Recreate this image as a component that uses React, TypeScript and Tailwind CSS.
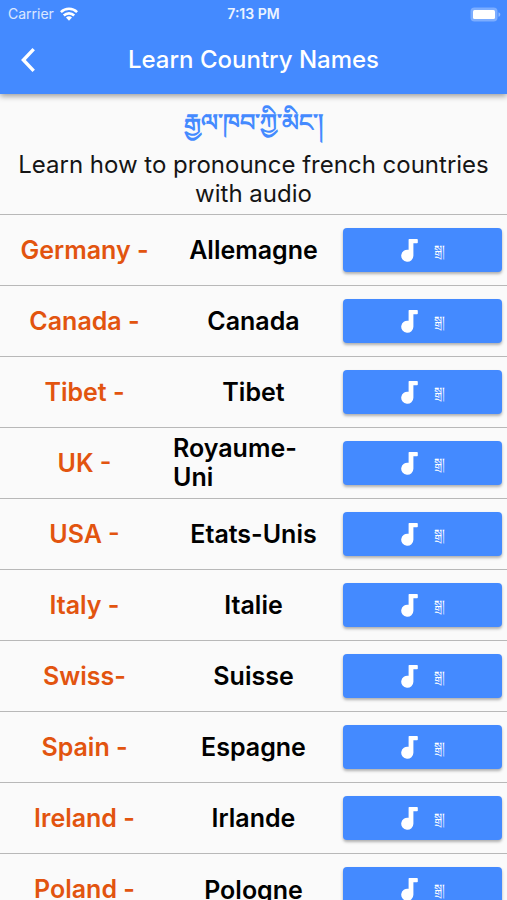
import React from 'react';

interface Country {
  name: string;
  french: string;
}

const COUNTRIES: Country[] = [
  { name: 'Germany -', french: 'Allemagne' },
  { name: 'Canada -', french: 'Canada' },
  { name: 'Tibet -', french: 'Tibet' },
  { name: 'UK -', french: 'Royaume-Uni' },
  { name: 'USA -', french: 'Etats-Unis' },
  { name: 'Italy -', french: 'Italie' },
  { name: 'Swiss-', french: 'Suisse' },
  { name: 'Spain -', french: 'Espagne' },
  { name: 'Ireland -', french: 'Irlande' },
  { name: 'Poland -', french: 'Pologne' },
];

const WifiIcon: React.FC = () => (
  <svg viewBox="0 0 18 14" className="h-3.5 w-[18px]" fill="none" stroke="currentColor" strokeWidth="2.6" aria-hidden="true">
    <path d="M0.9 5.1a11.6 11.6 0 0 1 16.2 0" />
    <path d="M3.8 8.5a7.4 7.4 0 0 1 10.4 0" />
    <path d="M9 13.8l-3-3.2a4.2 4.2 0 0 1 6 0z" fill="currentColor" stroke="none" />
  </svg>
);

const BatteryIcon: React.FC = () => (
  <svg viewBox="0 0 31 15" className="h-[15px] w-[31px]" aria-hidden="true">
    <rect x="0.5" y="0.5" width="27" height="14" rx="4" fill="#fff" fillOpacity="0.3" />
    <rect x="3" y="3" width="22" height="9" rx="1.5" fill="#fff" />
    <path d="M28.5 5.2c1.2.4 1.8 1.3 1.8 2.3s-.6 1.9-1.8 2.3z" fill="#fff" fillOpacity="0.4" />
  </svg>
);

const NoteIcon: React.FC = () => (
  <svg viewBox="0 0 17 24" className="h-6 w-[17px]" fill="currentColor" aria-hidden="true">
    <path d="M7.6 1.6Q7.6 1 8.2 1h7.8q.8 0 .8.8v2.6q0 .8-.8.8h-3.6v12.6a6.1 6.1 0 1 1-4.8-6z" />
  </svg>
);

const StatusBar: React.FC = () => (
  <div className="grid h-7 grid-cols-3 items-center px-1.5 text-sm">
    <div className="flex items-center gap-1.5 pl-0.5">
      <span className="text-white/80">Carrier</span>
      <WifiIcon />
    </div>
    <span className="text-center font-semibold text-white/90">7:13 PM</span>
    <div className="flex justify-end">
      <BatteryIcon />
    </div>
  </div>
);

const CountryRow: React.FC<{ country: Country }> = ({ country }) => (
  <tr className="h-[71px] border-t border-[#b8b8b8] text-[25px] leading-[29px] font-semibold">
    <th scope="row" className="p-0 text-center font-semibold text-[#e2540f]">{country.name}</th>
    <td className="px-1 py-0 text-center text-black">
      <span className="inline-block text-left align-middle">{country.french}</span>
    </td>
    <td className="px-[5px] py-0">
      <button
        type="button"
        aria-label={`Play ${country.french}`}
        className="flex h-11 w-full items-center justify-center gap-4 rounded-sm bg-[#448aff] text-white shadow-[0_2px_3px_rgba(0,0,0,0.3)]"
      >
        <NoteIcon />
        <span lang="bo" className="text-xs leading-3 font-normal">སྒྲ།</span>
      </button>
    </td>
  </tr>
);

const App: React.FC = () => {
  return (
    <div className="flex h-screen flex-col overflow-hidden bg-[#fafafa] font-['Inter','Noto_Sans',sans-serif]">
      <header className="relative bg-[#448aff] pb-0.5 text-white shadow-[0_2px_6px_rgba(0,0,0,0.4)]">
        <StatusBar />
        <div className="grid h-16 grid-cols-[56px_1fr_56px] items-center">
          <button type="button" aria-label="Back" className="flex h-full items-center justify-center">
            <svg viewBox="0 0 14 24" className="h-6 w-3.5" fill="none" stroke="currentColor" strokeWidth="3.4" aria-hidden="true">
              <path d="M12.7 1.2L2.4 12l10.3 10.8" />
            </svg>
          </button>
          <h1 className="text-center text-2xl font-medium">Learn Country Names</h1>
        </div>
      </header>
      <main className="flex-1 overflow-y-auto [scrollbar-width:none]">
        <div className="px-2 pt-2 pb-1.5 text-center text-2xl leading-[29px]">
          <p lang="bo" className="h-12 pt-1.5 font-bold text-[#448aff]">རྒྱལ་ཁབ་ཀྱི་མིང་།</p>
          <p className="text-[#151515]">Learn how to pronounce french countries with audio</p>
        </div>
        <table className="w-full table-fixed border-collapse">
          <tbody>
            {COUNTRIES.map((country) => (
              <CountryRow key={country.name} country={country} />
            ))}
          </tbody>
        </table>
      </main>
    </div>
  );
};

export default App;
